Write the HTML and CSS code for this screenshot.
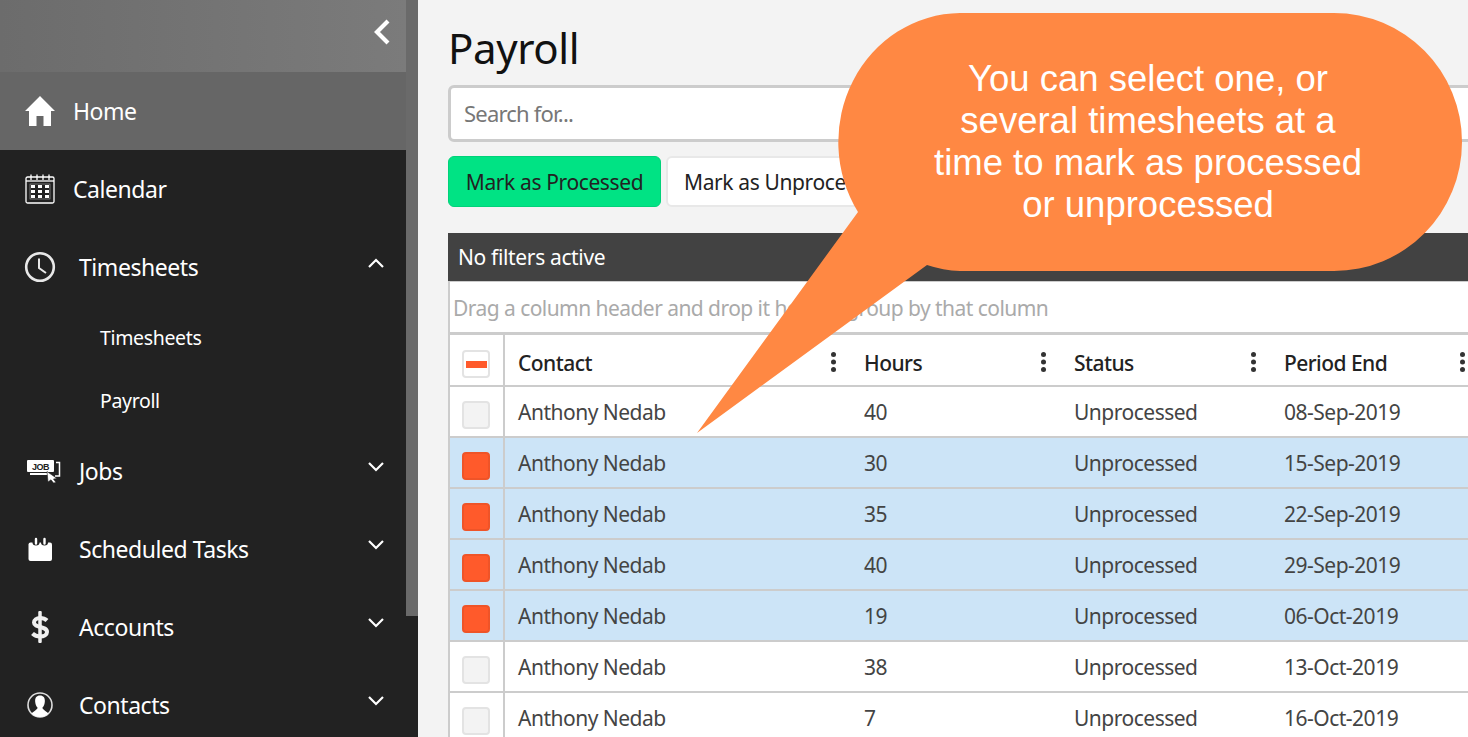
FILE: index.html
```html
<!DOCTYPE html>
<html lang="en">
<head>
<meta charset="utf-8">
<title>Payroll</title>
<link rel="stylesheet" href="styles.css">
</head>
<body>
<div class="app">
  <aside class="sidebar">
    <div class="side-inner">
      <div class="side-top">
        <svg class="collapse" width="18" height="26" viewBox="0 0 18 26"><path d="M15 2 L4 13 L15 24" fill="none" stroke="#fff" stroke-width="4.200"/></svg>
      </div>
      <a class="nav nav-active">
        <svg class="ico" width="32" height="32" viewBox="0 0 32 32"><path d="M16 1 L31 16 L27 16 L27 31 L19.500 31 L19.500 21 L12.500 21 L12.500 31 L5 31 L5 16 L1 16 Z" fill="#fff"/></svg>
        <span class="nav-label nav-label-tight">Home</span>
      </a>
      <a class="nav">
        <svg class="ico" width="32" height="32" viewBox="0 0 32 32"><g fill="none" stroke="#fff" stroke-width="1.300"><rect x="2" y="4" width="28" height="26" rx="1.500"/><path d="M7 1.500V7M13 1.500V7M19 1.500V7M25 1.500V7"/><path d="M2 8H30"/><rect x="6" y="11" width="20" height="15" stroke="#aaa" stroke-width=".6"/></g><g fill="#fff"><rect x="7" y="12" width="4" height="3"/><rect x="14" y="12" width="4" height="3"/><rect x="21" y="12" width="4" height="3"/><rect x="7" y="17" width="4" height="3"/><rect x="14" y="17" width="4" height="3"/><rect x="21" y="17" width="4" height="3"/><rect x="7" y="22" width="4" height="3"/><rect x="14" y="22" width="4" height="3"/><rect x="21" y="22" width="4" height="3"/></g></svg>
        <span class="nav-label nav-label-tight">Calendar</span>
      </a>
      <a class="nav">
        <svg class="ico" width="32" height="32" viewBox="0 0 32 32"><circle cx="16" cy="16" r="13.800" fill="none" stroke="#e8e8e8" stroke-width="2.600"/><path d="M15 7.500V17L22 22" fill="none" stroke="#e8e8e8" stroke-width="2"/></svg>
        <span class="nav-label">Timesheets</span>
        <svg class="chev" width="16" height="10" viewBox="0 0 16 10"><path d="M1 9L8 2L15 9" fill="none" stroke="#fff" stroke-width="2.200"/></svg>
      </a>
      <a class="sub">Timesheets</a>
      <a class="sub">Payroll</a>
      <a class="nav">
        <svg class="ico-job" width="34" height="24" viewBox="0 0 34 24"><rect x="0" y="1" width="27" height="12" rx="1" fill="#fff"/><text x="13.500" y="10.500" class="job-text">JOB</text><rect x="3" y="14" width="18" height="2" fill="#fff"/><path d="M29 3.500H32.500V17H28" fill="none" stroke="#fff" stroke-width="1.500"/><path d="M20 12.500L30 19.500L26.500 20L29 23.500L26.500 24L24 20.800L21 23Z" fill="#fff" stroke="#222" stroke-width=".6"/></svg>
        <span class="nav-label nav-label-job">Jobs</span>
        <svg class="chev" width="16" height="10" viewBox="0 0 16 10"><path d="M1 1L8 8L15 1" fill="none" stroke="#fff" stroke-width="2.200"/></svg>
      </a>
      <a class="nav">
        <svg class="ico" width="32" height="32" viewBox="0 0 32 32"><rect x="4.500" y="9.500" width="23.500" height="18.500" rx="2" fill="#fff"/><circle cx="12" cy="9" r="3.600" fill="#222"/><circle cx="20.500" cy="9" r="3.600" fill="#222"/><path d="M12 6V10.500M20.500 6V10.500" stroke="#fff" stroke-width="2.400" stroke-linecap="round"/></svg>
        <span class="nav-label">Scheduled Tasks</span>
        <svg class="chev" width="16" height="10" viewBox="0 0 16 10"><path d="M1 1L8 8L15 1" fill="none" stroke="#fff" stroke-width="2.200"/></svg>
      </a>
      <a class="nav">
        <svg class="ico" width="32" height="32" viewBox="0 0 32 32"><path d="M23 9.500C21 7.500 18.500 7 16 7C12.500 7 10 8.800 10 11.500C10 17.500 23 14.500 23 21C23 23.800 20 25.500 16 25.500C13 25.500 10.500 24.500 8.500 22.500" fill="none" stroke="#f0f0f0" stroke-width="4"/><path d="M16 1.500V30.500" stroke="#f0f0f0" stroke-width="3.500" stroke-linecap="round"/></svg>
        <span class="nav-label">Accounts</span>
        <svg class="chev" width="16" height="10" viewBox="0 0 16 10"><path d="M1 1L8 8L15 1" fill="none" stroke="#fff" stroke-width="2.200"/></svg>
      </a>
      <a class="nav">
        <svg class="ico" width="32" height="32" viewBox="0 0 32 32"><circle cx="16" cy="16" r="12" fill="none" stroke="#ddd" stroke-width="1.600"/><path d="M16 6.500C12 6.500 10.800 9.500 11.200 13C11.500 16 12.500 17.500 13.500 18.500C13.800 20.500 10.500 21.500 7.500 24.500A12 12 0 0 0 24.500 24.500C21.500 21.500 18.200 20.500 18.500 18.500C19.500 17.500 20.500 16 20.800 13C21.200 9.500 20 6.500 16 6.500Z" fill="#fff"/></svg>
        <span class="nav-label">Contacts</span>
        <svg class="chev" width="16" height="10" viewBox="0 0 16 10"><path d="M1 1L8 8L15 1" fill="none" stroke="#fff" stroke-width="2.200"/></svg>
      </a>
    </div>
    <div class="side-scroll"><div class="side-thumb"></div></div>
  </aside>

  <main class="main">
    <h1 class="title">Payroll</h1>
    <div class="search">Search for...</div>
    <div class="actions">
      <button class="btn btn-green">Mark as Processed</button>
      <button class="btn btn-white">Mark as Unprocessed</button>
    </div>
    <section class="grid">
      <div class="filters">No filters active</div>
      <div class="group">Drag a column header and drop it here to group by that column</div>
      <div class="row head">
        <div class="cell cell-check"><span class="check check-mixed"></span></div>
        <div class="cell col-contact">Contact<i class="dots"></i></div>
        <div class="cell col-hours">Hours<i class="dots"></i></div>
        <div class="cell col-status">Status<i class="dots"></i></div>
        <div class="cell col-end">Period End<i class="dots"></i></div>
      </div>
      <div class="row">
        <div class="cell cell-check"><span class="check"></span></div>
        <div class="cell col-contact">Anthony Nedab</div>
        <div class="cell col-hours">40</div>
        <div class="cell col-status">Unprocessed</div>
        <div class="cell col-end">08-Sep-2019</div>
      </div>
      <div class="row selected">
        <div class="cell cell-check"><span class="check check-on"></span></div>
        <div class="cell col-contact">Anthony Nedab</div>
        <div class="cell col-hours">30</div>
        <div class="cell col-status">Unprocessed</div>
        <div class="cell col-end">15-Sep-2019</div>
      </div>
      <div class="row selected">
        <div class="cell cell-check"><span class="check check-on"></span></div>
        <div class="cell col-contact">Anthony Nedab</div>
        <div class="cell col-hours">35</div>
        <div class="cell col-status">Unprocessed</div>
        <div class="cell col-end">22-Sep-2019</div>
      </div>
      <div class="row selected">
        <div class="cell cell-check"><span class="check check-on"></span></div>
        <div class="cell col-contact">Anthony Nedab</div>
        <div class="cell col-hours">40</div>
        <div class="cell col-status">Unprocessed</div>
        <div class="cell col-end">29-Sep-2019</div>
      </div>
      <div class="row selected">
        <div class="cell cell-check"><span class="check check-on"></span></div>
        <div class="cell col-contact">Anthony Nedab</div>
        <div class="cell col-hours">19</div>
        <div class="cell col-status">Unprocessed</div>
        <div class="cell col-end">06-Oct-2019</div>
      </div>
      <div class="row">
        <div class="cell cell-check"><span class="check"></span></div>
        <div class="cell col-contact">Anthony Nedab</div>
        <div class="cell col-hours">38</div>
        <div class="cell col-status">Unprocessed</div>
        <div class="cell col-end">13-Oct-2019</div>
      </div>
      <div class="row">
        <div class="cell cell-check"><span class="check"></span></div>
        <div class="cell col-contact">Anthony Nedab</div>
        <div class="cell col-hours">7</div>
        <div class="cell col-status">Unprocessed</div>
        <div class="cell col-end">16-Oct-2019</div>
      </div>
    </section>
  </main>
</div>

<div class="callout">
  <svg class="callout-shape" width="780" height="430" viewBox="0 0 780 430"><path d="M0 420 L161 199 A123 129 0 0 1 263 0 H637 A128 129 0 0 1 637 258 H263 A123 129 0 0 1 230 252 Z" fill="#ff8843"/></svg>
  <p class="callout-text">You can select one, or<br>several timesheets at a<br>time to mark as processed<br>or unprocessed</p>
</div>
</body>
</html>
```

FILE: styles.css
```css
* { box-sizing: border-box; }
html, body { margin: 0; height: 100%; overflow: hidden; }
body { font-family: "Noto Sans", "Open Sans", sans-serif; background: #f3f3f3; color: #333; }
.app { display: flex; width: 1468px; height: 737px; overflow: hidden; position: relative; }

.sidebar { flex: 0 0 418px; display: flex; background: #222; height: 744px; }
.side-inner { flex: 0 0 406px; display: flex; flex-direction: column; }
.side-scroll { flex: 0 0 12px; }
.side-thumb { height: 616px; background: #6a6a6a; }
.side-top { height: 72px; background: linear-gradient(90deg, #6c6c6c, #7b7b7b); display: flex; align-items: center; justify-content: flex-end; padding-right: 15px; padding-bottom: 8px; flex: none; }
.nav { height: 78px; flex: none; display: flex; align-items: center; padding-left: 24px; color: #fff; font-size: 23px; letter-spacing: -.45px; }
.nav-active { background: #666; }
.ico { flex: none; }
.ico-job { flex: none; margin-left: 3px; }
.nav-label { margin-left: 23px; flex: 1; }
.nav-label-tight { margin-left: 17px; }
.nav-label-job { margin-left: 18px; }
.chev { flex: none; margin-right: 22px; margin-top: -8px; }
.sub { height: 63px; flex: none; display: flex; align-items: center; padding-left: 100px; color: #fff; font-size: 19.500px; letter-spacing: -.35px; }
.job-text { font: bold 9px "Liberation Sans", sans-serif; fill: #222; text-anchor: middle; }

.main { flex: 1; padding-left: 30px; min-width: 0; }
.title { margin: 0; height: 85px; padding-top: 20px; font-size: 42px; line-height: 56px; font-weight: 400; color: #111; letter-spacing: -.4px; }
.search { height: 57px; width: 1100px; border: 3px solid #ccc; border-radius: 6px; background: #fff; font-size: 22px; color: #777; line-height: 50px; padding-left: 13px; letter-spacing: -.8px; }
.actions { display: flex; gap: 5px; margin-top: 14px; }
.btn { height: 51px; font: inherit; font-size: 21px; letter-spacing: -.38px; border-radius: 6px; padding: 0 18px; color: #222; white-space: nowrap; flex: none; }
.btn-green { background: #00e384; border: 1px solid #00d27a; width: 213px; padding: 0; }
.btn-white { background: #fff; border: 2px solid #e8e8e8; padding: 0 16px; }

.grid { margin-top: 26px; width: 1100px; }
.filters { height: 48px; background: #424242; color: #fff; font-size: 21px; line-height: 48px; padding-left: 10px; letter-spacing: -.35px; }
.group { height: 54px; background: #fff; border-left: 2px solid #ccc; border-top: 1px solid #ccc; border-bottom: 3px solid #ccc; color: #aaa; font-size: 21px; line-height: 52px; padding-left: 3px; letter-spacing: -.55px; white-space: nowrap; }
.row { display: grid; grid-template-columns: 55px 346px 210px 210px 1fr; height: 51px; background: #fff; border-left: 2px solid #ccc; border-bottom: 2px solid #ccc; font-size: 21px; letter-spacing: -.5px; color: #444; }
.head { height: 52px; padding-top: 6px; color: #222; font-weight: 500; letter-spacing: -.55px; }
.selected { background: #cce4f7; }
.cell { display: flex; align-items: center; padding-left: 13px; position: relative; white-space: nowrap; }
.cell-check { border-right: 2px solid #ccc; padding-left: 12px; }
.head .cell-check { margin-top: -6px; }
.check { width: 28px; height: 28px; border-radius: 4px; background: #f3f3f3; border: 2px solid #e3e3e3; display: block; position: relative; margin-top: 6px; }
.check-mixed { background: #fff; margin-top: 8px; }
.check-mixed::after { content: ""; position: absolute; left: 2px; right: 1px; top: 9px; height: 7px; background: #ff5a2b; }
.check-on { background: #ff5a2b; border-color: #ef5428; }
.dots { position: absolute; right: 15px; top: 50%; margin-top: -11px; width: 5px; height: 5px; border-radius: 50%; background: #333; box-shadow: 0 7.500px 0 #333, 0 15px 0 #333; }
.col-end .dots { right: auto; left: 189px; }

.callout { position: absolute; left: 697px; top: 13px; width: 780px; height: 430px; }
.callout-shape { position: absolute; left: 0; top: 0; display: block; }
.callout-text { position: absolute; left: 201px; top: 45px; width: 500px; margin: 0; text-align: center; color: #fff; font-family: "Liberation Sans", Arial, sans-serif; font-size: 36.500px; line-height: 42px; }
```
